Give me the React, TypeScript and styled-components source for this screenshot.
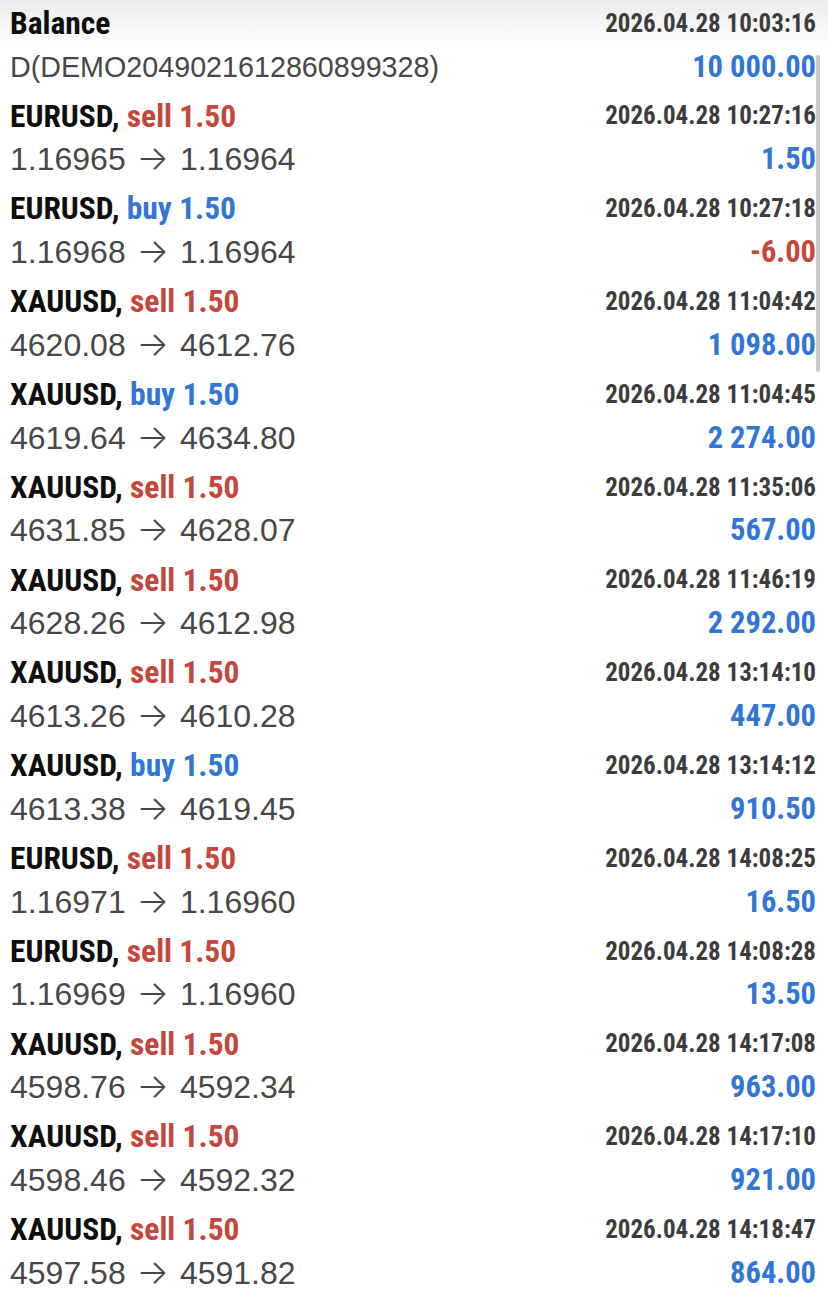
import React from 'react'
import styled, { createGlobalStyle } from 'styled-components'

const GlobalStyle = createGlobalStyle`
  html, body {
    margin: 0;
    padding: 0;
  }
  body {
    width: 828px;
    height: 1301px;
    overflow: hidden;
    background: linear-gradient(#ebebeb 0px, #f5f5f5 22px, #ffffff 50px);
    font-family: "Liberation Sans", Arial, sans-serif;
  }
`

const condensed = `Roboto, "Open Sans", sans-serif`

const List = styled.div`
  position: relative;
  padding: 0 12px 0 10px;
`

const Item = styled.div`
  display: grid;
  grid-template-columns: 1fr auto;
  grid-template-rows: 44px 41px;
  align-items: center;
  padding: 2px 0 5.8px;
`

const Title = styled.div`
  font-family: ${condensed};
  font-stretch: 75%;
  font-weight: 700;
  font-size: 31.5px;
  line-height: 1.15;
  color: #0e0e0e;
  white-space: nowrap;
`

const Side = styled.span<{ $side: 'buy' | 'sell' }>`
  color: ${({ $side }) => ($side === 'buy' ? '#3176d4' : '#c5463a')};
`

const Time = styled.div`
  font-family: ${condensed};
  font-stretch: 75%;
  font-weight: 700;
  font-size: 25px;
  line-height: 1.15;
  color: #3c3c3c;
  text-align: right;
  white-space: nowrap;
`

const Detail = styled.div<{ $small?: boolean }>`
  font-size: ${({ $small }) => ($small ? '28.7px' : '32px')};
  line-height: 36px;
  color: #474747;
  white-space: nowrap;
`

const Arrow = styled.span`
  font-family: Inter, "DejaVu Sans", sans-serif;
  font-weight: 300;
  font-size: 34px;
  line-height: 1;
  margin: 0 2px;
`

const Amount = styled.div<{ $loss?: boolean }>`
  font-family: ${condensed};
  font-stretch: 75%;
  font-weight: 700;
  font-size: 30.5px;
  line-height: 36px;
  color: ${({ $loss }) => ($loss ? '#c5463a' : '#3176d4')};
  text-align: right;
  white-space: nowrap;
`

const ScrollThumb = styled.div`
  position: absolute;
  left: 816px;
  top: 55px;
  width: 4px;
  height: 317px;
  border-radius: 2px;
  background: #c8c8c8;
`

type Deal = {
  symbol: string
  side: 'buy' | 'sell'
  open: string
  close: string
  time: string
  profit: string
}

const deals: Deal[] = [
  { symbol: 'EURUSD', side: 'sell', open: '1.16965', close: '1.16964', time: '10:27:16', profit: '1.50' },
  { symbol: 'EURUSD', side: 'buy', open: '1.16968', close: '1.16964', time: '10:27:18', profit: '-6.00' },
  { symbol: 'XAUUSD', side: 'sell', open: '4620.08', close: '4612.76', time: '11:04:42', profit: '1 098.00' },
  { symbol: 'XAUUSD', side: 'buy', open: '4619.64', close: '4634.80', time: '11:04:45', profit: '2 274.00' },
  { symbol: 'XAUUSD', side: 'sell', open: '4631.85', close: '4628.07', time: '11:35:06', profit: '567.00' },
  { symbol: 'XAUUSD', side: 'sell', open: '4628.26', close: '4612.98', time: '11:46:19', profit: '2 292.00' },
  { symbol: 'XAUUSD', side: 'sell', open: '4613.26', close: '4610.28', time: '13:14:10', profit: '447.00' },
  { symbol: 'XAUUSD', side: 'buy', open: '4613.38', close: '4619.45', time: '13:14:12', profit: '910.50' },
  { symbol: 'EURUSD', side: 'sell', open: '1.16971', close: '1.16960', time: '14:08:25', profit: '16.50' },
  { symbol: 'EURUSD', side: 'sell', open: '1.16969', close: '1.16960', time: '14:08:28', profit: '13.50' },
  { symbol: 'XAUUSD', side: 'sell', open: '4598.76', close: '4592.34', time: '14:17:08', profit: '963.00' },
  { symbol: 'XAUUSD', side: 'sell', open: '4598.46', close: '4592.32', time: '14:17:10', profit: '921.00' },
  { symbol: 'XAUUSD', side: 'sell', open: '4597.58', close: '4591.82', time: '14:18:47', profit: '864.00' },
]

export default function App() {
  return (
    <>
      <GlobalStyle />
      <List>
        <Item>
          <Title>Balance</Title>
          <Time>2026.04.28 10:03:16</Time>
          <Detail $small>D(DEMO2049021612860899328)</Detail>
          <Amount>10 000.00</Amount>
        </Item>
        {deals.map((d, i) => (
          <Item key={i}>
            <Title>
              {d.symbol}, <Side $side={d.side}>{d.side} 1.50</Side>
            </Title>
            <Time>2026.04.28 {d.time}</Time>
            <Detail>
              {d.open} <Arrow>→</Arrow> {d.close}
            </Detail>
            <Amount $loss={d.profit.startsWith('-')}>{d.profit}</Amount>
          </Item>
        ))}
        <ScrollThumb />
      </List>
    </>
  )
}
